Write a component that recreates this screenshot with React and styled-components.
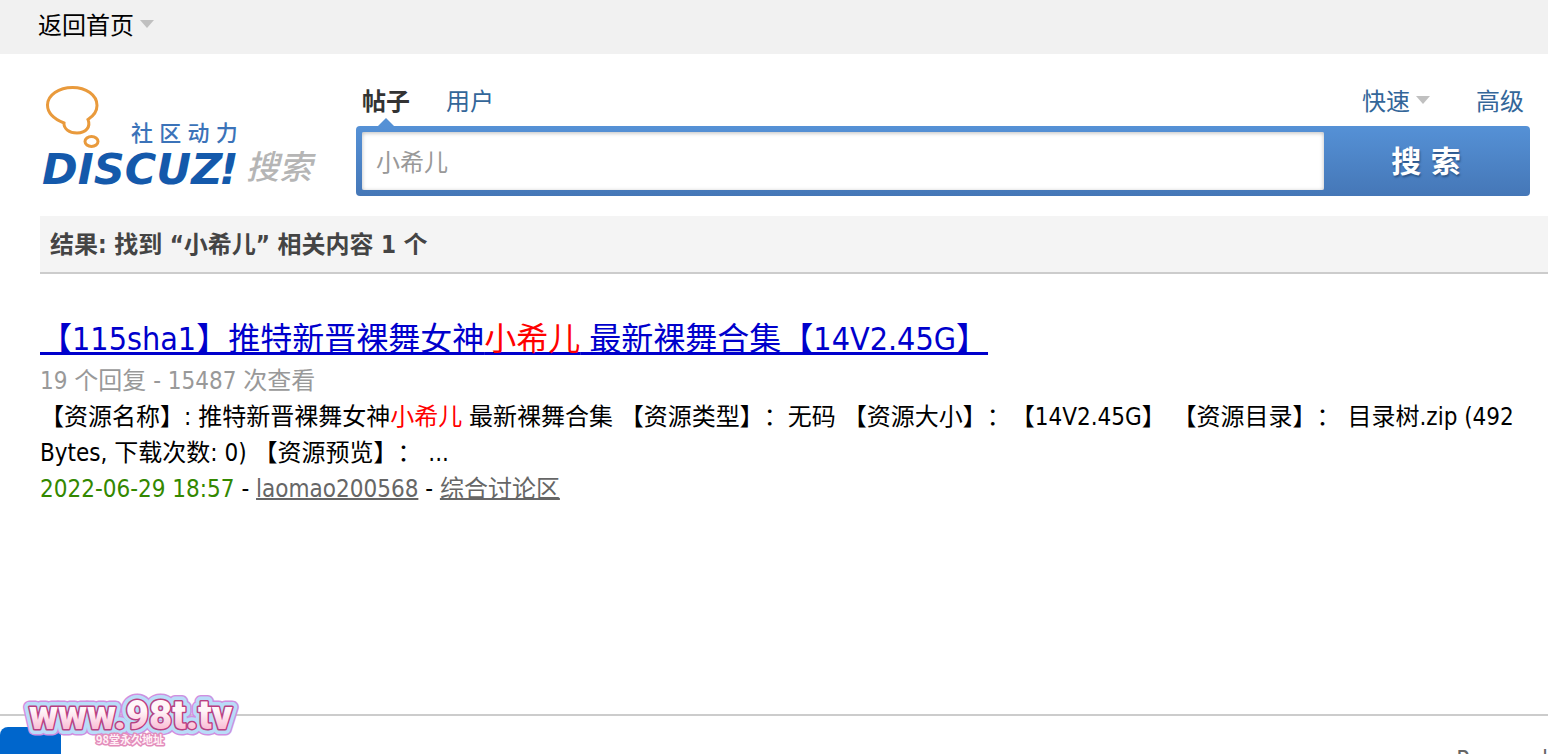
import React, { useState } from 'react'
import styled, { createGlobalStyle } from 'styled-components'

const GlobalStyle = createGlobalStyle`
  * {
    box-sizing: border-box;
  }
  body {
    margin: 0;
    background: #fff;
    color: #000;
    font: 24px/36px "DejaVu Sans Condensed", "Noto Sans", "Noto Sans CJK SC", sans-serif;
    text-spacing-trim: space-all;
  }
  h2, h3, p {
    margin: 0;
  }
  a {
    text-decoration: none;
  }
`

const results = [
  {
    id: 1,
    title: ['【115sha1】推特新晋裸舞女神', ' 最新裸舞合集【14V2.45G】'],
    replies: 19,
    views: 15487,
    text: [
      '【资源名称】: 推特新晋裸舞女神',
      ' 最新裸舞合集 【资源类型】：无码 【资源大小】：【14V2.45G】 【资源目录】： 目录树.zip (492 Bytes, 下载次数: 0) 【资源预览】： ...',
    ],
    date: '2022-06-29 18:57',
    author: 'laomao200568',
    forum: '综合讨论区',
  },
]

function Logo() {
  return (
    <LogoSvg viewBox="40 82 276 108" role="img" aria-label="Discuz! 社区动力 搜索">
      <g fill="none" stroke="#e99a3c" strokeWidth="3">
        <path d="M64 123 C54 119 47.500 113 47.500 105 C47.500 95 59 87.500 72.500 87.500 C86 87.500 97 95 97 105.500 C97 111 93.500 116 88 119.500 C91 127 86 133 77 133 C69 133 63.500 128.500 64 123 Z" />
        <ellipse cx="91.500" cy="141.500" rx="6.500" ry="5" />
      </g>
      <text x="131" y="141" className="slogan">社 区 动 力</text>
      <text x="42" y="184" className="brand">DISCUZ</text>
      <text x="219" y="184" className="brand">!</text>
      <text x="246" y="179" className="search">搜索</text>
    </LogoSvg>
  )
}

function Watermark() {
  const layers = [
    { stroke: '#d08fe0', width: 13 },
    { stroke: '#b9dcf8', width: 10 },
    { stroke: '#b83f80', width: 3 },
  ]
  return (
    <WatermarkSvg viewBox="0 0 216 56" role="img" aria-label="www.98t.tv">
      <defs>
        <linearGradient id="pink" x1="0" y1="0" x2="0" y2="1">
          <stop offset="0.400" stopColor="#fff6f9" />
          <stop offset="0.850" stopColor="#f9b4cf" />
        </linearGradient>
      </defs>
      {layers.map(l => (
        <text key={l.stroke} x="6" y="36" className="site" stroke={l.stroke} strokeWidth={l.width}>www.98t.tv</text>
      ))}
      <text x="6" y="36" className="site" fill="url(#pink)">www.98t.tv</text>
      <text x="73" y="51" className="note">98堂永久地址</text>
    </WatermarkSvg>
  )
}

export default function App() {
  const [keyword, setKeyword] = useState('小希儿')

  return (
    <Page lang="zh-CN">
      <GlobalStyle />
      <TopBar>
        <TopLink href="#">返回首页<Arrow /></TopLink>
      </TopBar>

      <Header>
        <Logo />
        <SearchForm onSubmit={e => e.preventDefault()}>
          <Tabs>
            <Tab href="#" $active>帖子</Tab>
            <Tab href="#">用户</Tab>
            <Spacer />
            <Tab href="#" $menu>快速<Arrow /></Tab>
            <Tab href="#">高级</Tab>
          </Tabs>
          <SearchBar>
            <SearchInput type="text" aria-label="搜索" value={keyword} onChange={e => setKeyword(e.target.value)} />
            <SearchButton type="submit">搜 索</SearchButton>
          </SearchBar>
        </SearchForm>
      </Header>

      <ResultHead>结果: 找到 “小希儿” 相关内容 1 个</ResultHead>

      <ResultList>
        {results.map(r => (
          <li key={r.id}>
            <Title><a href="#">{r.title[0]}<Mark>小希儿</Mark>{r.title[1]}</a></Title>
            <Stats>{r.replies} 个回复 - {r.views} 次查看</Stats>
            <p>{r.text[0]}<Mark>小希儿</Mark>{r.text[1]}</p>
            <p>
              <PostDate>{r.date}</PostDate> - <GreyLink href="#">{r.author}</GreyLink> - <GreyLink href="#">{r.forum}</GreyLink>
            </p>
          </li>
        ))}
      </ResultList>

      <Footer>
        <BlueTab />
        <Powered>Powered</Powered>
        <Watermark />
      </Footer>
    </Page>
  )
}

const Page = styled.div`
  height: 100vh;
  display: flex;
  flex-direction: column;
  overflow: hidden;
`

const TopBar = styled.nav`
  flex: none;
  height: 54px;
  padding: 8px 38px;
  background: #f1f1f1;
`

const TopLink = styled.a`
  color: #000;
`

const Arrow = styled.i`
  display: inline-block;
  margin: 0 0 6px 6px;
  vertical-align: middle;
  border: 7px solid transparent;
  border-top: 8px solid #c0c0c0;
  border-bottom: 0;
`

const Header = styled.header`
  flex: none;
  display: flex;
  gap: 40px;
  padding: 28px 18px 20px 40px;
`

const LogoSvg = styled.svg`
  flex: none;
  width: 276px;
  height: 108px;
  overflow: visible;

  .slogan {
    font: 500 22px "DejaVu Sans Condensed", "Noto Sans CJK SC", sans-serif;
    fill: #3b73b9;
  }
  .brand {
    font: italic bold 43px "DejaVu Sans", sans-serif;
    fill: #1459ab;
  }
  .search {
    font: italic 500 33px "Noto Sans CJK SC", sans-serif;
    fill: #b5b5b5;
  }
`

const SearchForm = styled.form`
  flex: 1;
  min-width: 0;
`

const Tabs = styled.div`
  display: flex;
  gap: 36px;
  height: 44px;
  padding: 2px 6px 0;
`

const Tab = styled.a`
  position: relative;
  margin-right: ${p => (p.$menu ? '10px' : '0')};
  color: ${p => (p.$active ? '#333' : '#369')};
  font-weight: ${p => (p.$active ? 'bold' : 'normal')};

  &::after {
    content: "";
    display: ${p => (p.$active ? 'block' : 'none')};
    position: absolute;
    left: 16px;
    bottom: 0;
    border: 8px solid transparent;
    border-top: 0;
    border-bottom-color: #5591d5;
  }
`

const Spacer = styled.span`
  flex: 1;
`

const SearchBar = styled.div`
  display: flex;
  height: 70px;
  padding: 6px;
  border-radius: 4px;
  background: linear-gradient(#5591d6, #4577b7);
`

const SearchInput = styled.input`
  flex: 1;
  min-width: 0;
  padding: 4px 14px 0;
  border: 0;
  outline: 0;
  border-radius: 2px;
  background: #fff;
  box-shadow: inset 0 1px 4px #bbb;
  color: #999;
  font: inherit;
`

const SearchButton = styled.button`
  width: 200px;
  padding: 2px 0 0 4px;
  border: 0;
  background: none;
  color: #fff;
  font: bold 30px/36px "DejaVu Sans Condensed", "Noto Sans CJK SC", sans-serif;
  text-shadow: 1px 2px 2px #2c5588;
  cursor: pointer;
`

const ResultHead = styled.h2`
  flex: none;
  height: 58px;
  margin-left: 40px;
  padding: 11px 10px 0;
  border-bottom: 2px solid #ccc;
  background: #f4f4f4;
  color: #444;
  font-size: 24px;
  line-height: 36px;
`

const ResultList = styled.ul`
  flex: 1;
  margin: 0;
  padding: 41px 18px 0 40px;
  list-style: none;
`

const Title = styled.h3`
  font-size: 32px;
  font-weight: normal;
  line-height: 48px;

  a {
    color: #00c;
    text-decoration: underline;
    text-decoration-thickness: 3px;
    text-decoration-skip-ink: none;
  }
`

const Mark = styled.em`
  color: #f00;
  font-style: normal;
`

const Stats = styled.p`
  color: #999;
`

const PostDate = styled.span`
  color: #380;
`

const GreyLink = styled.a`
  color: #666;
  text-decoration: underline;
  text-decoration-thickness: 2px;
  text-decoration-skip-ink: none;
`

const Footer = styled.footer`
  position: relative;
  flex: none;
  display: flex;
  justify-content: space-between;
  height: 40px;
  border-top: 2px solid #ccc;
`

const BlueTab = styled.div`
  width: 61px;
  height: 40px;
  margin-top: 11px;
  border-radius: 8px 8px 0 0;
  background: #06c;
`

const Powered = styled.p`
  padding-top: 26px;
  color: #666;
`

// floats over the footer line
const WatermarkSvg = styled.svg`
  position: absolute;
  left: 23px;
  bottom: 5px;
  width: 216px;
  height: 56px;
  overflow: visible;

  text {
    stroke-linejoin: round;
  }
  .site {
    font: 900 40px Roboto, sans-serif;
  }
  .note {
    font: bold 11px "Noto Sans CJK SC", sans-serif;
    fill: #fff0f6;
    stroke: #e38dbb;
    stroke-width: 3px;
    paint-order: stroke;
  }
`
